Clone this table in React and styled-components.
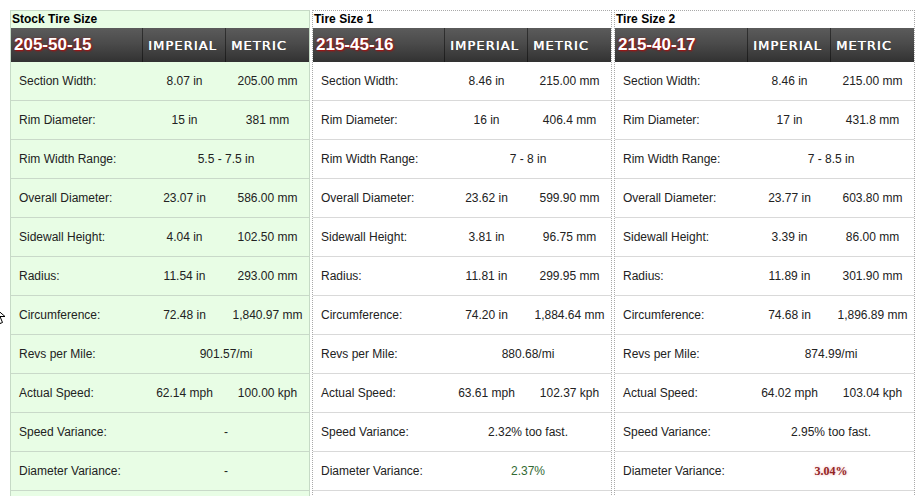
import React from "react";
import styled, { createGlobalStyle, css } from "styled-components";

const GlobalStyle = createGlobalStyle`
  html, body { margin: 0; padding: 0; overflow: hidden; background: #ffffff; }
  body { font-family: "Liberation Sans", Arial, sans-serif; }
`;

const Page = styled.div`
  position: relative;
  padding: 10px 0 0 10px;
`;

const Compare = styled.div`
  display: flex;
  align-items: flex-start;
  gap: 2px;
`;

const Panel = styled.section`
  box-sizing: border-box;
  width: ${(p) => p.$width}px;
  flex: none;
  ${(p) =>
    p.$stock
      ? css`
          border: 1px solid #c6dac6;
          background: #e8fde5;
        `
      : css`
          border: 1px dotted #a9a9a9;
          background: #ffffff;
        `}
`;

const Title = styled.div`
  height: 17px;
  padding-left: 1px;
  font: bold 12px/17px "Liberation Sans", Arial, sans-serif;
  color: #000;
`;

const HeaderBar = styled.div`
  display: grid;
  grid-template-columns: 1fr 83px 83px;
  height: 34px;
  background: linear-gradient(#5b5b5b 0%, #4b4b4b 45%, #323232 100%);
`;

const HeadCell = styled.div`
  display: flex;
  align-items: center;
  padding-left: ${(p) => (p.$size ? 3 : 5)}px;
  border-right: ${(p) => (p.$last ? "none" : "1px solid rgba(0,0,0,0.45)")};
  ${(p) =>
    p.$size
      ? css`
          font: bold 17px "Liberation Sans", Arial, sans-serif;
          color: #ffffff;
          text-shadow: 1px 1px 2px rgba(200, 0, 0, 0.85), -1px 0 2px rgba(170, 0, 0, 0.5);
        `
      : css`
          font: 13px "DejaVu Sans", Verdana, sans-serif;
          letter-spacing: 1.1px;
          color: #ffffff;
          text-shadow: 0.4px 0 0 #ffffff;
        `}
`;

const Row = styled.div`
  display: grid;
  grid-template-columns: 1fr 83px 83px;
  height: 38px;
  align-items: center;
  border-bottom: 1px solid ${(p) => (p.$stock ? "#c9d9c9" : "#d9d9d9")};
  font: 12px "Liberation Sans", Arial, sans-serif;
  color: #222;
`;

const Label = styled.div`
  padding-left: 8px;
  white-space: nowrap;
`;

const Value = styled.div`
  text-align: center;
  white-space: nowrap;
  ${(p) => p.$span && css`grid-column: span 2;`}
  ${(p) => p.$tone === "good" && css`color: #336a33;`}
  ${(p) =>
    p.$tone === "bad" &&
    css`
      color: #922424;
      font: bold 12px "Liberation Serif", "Times New Roman", serif;
      text-shadow: 0 0 3px rgba(220, 80, 80, 0.45);
    `}
`;

const Cursor = styled.svg`
  position: absolute;
  left: -7px;
  top: 306px;
`;

const labels = [
  "Section Width:",
  "Rim Diameter:",
  "Rim Width Range:",
  "Overall Diameter:",
  "Sidewall Height:",
  "Radius:",
  "Circumference:",
  "Revs per Mile:",
  "Actual Speed:",
  "Speed Variance:",
  "Diameter Variance:",
  "",
];

const panels = [
  {
    title: "Stock Tire Size",
    size: "205-50-15",
    stock: true,
    width: 300,
    values: [
      ["8.07 in", "205.00 mm"],
      ["15 in", "381 mm"],
      ["5.5 - 7.5 in"],
      ["23.07 in", "586.00 mm"],
      ["4.04 in", "102.50 mm"],
      ["11.54 in", "293.00 mm"],
      ["72.48 in", "1,840.97 mm"],
      ["901.57/mi"],
      ["62.14 mph", "100.00 kph"],
      ["-"],
      ["-"],
      [""],
    ],
  },
  {
    title: "Tire Size 1",
    size: "215-45-16",
    width: 300,
    values: [
      ["8.46 in", "215.00 mm"],
      ["16 in", "406.4 mm"],
      ["7 - 8 in"],
      ["23.62 in", "599.90 mm"],
      ["3.81 in", "96.75 mm"],
      ["11.81 in", "299.95 mm"],
      ["74.20 in", "1,884.64 mm"],
      ["880.68/mi"],
      ["63.61 mph", "102.37 kph"],
      ["2.32% too fast."],
      ["2.37%"],
      [""],
    ],
    tones: { 10: "good" },
  },
  {
    title: "Tire Size 2",
    size: "215-40-17",
    width: 301,
    values: [
      ["8.46 in", "215.00 mm"],
      ["17 in", "431.8 mm"],
      ["7 - 8.5 in"],
      ["23.77 in", "603.80 mm"],
      ["3.39 in", "86.00 mm"],
      ["11.89 in", "301.90 mm"],
      ["74.68 in", "1,896.89 mm"],
      ["874.99/mi"],
      ["64.02 mph", "103.04 kph"],
      ["2.95% too fast."],
      ["3.04%"],
      [""],
    ],
    tones: { 10: "bad" },
  },
];

function TirePanel({ panel }) {
  return (
    <Panel $stock={panel.stock} $width={panel.width}>
      <Title>{panel.title}</Title>
      <HeaderBar>
        <HeadCell $size>{panel.size}</HeadCell>
        <HeadCell>IMPERIAL</HeadCell>
        <HeadCell $last>METRIC</HeadCell>
      </HeaderBar>
      {labels.map((label, i) => {
        const vals = panel.values[i];
        const tone = panel.tones ? panel.tones[i] : undefined;
        return (
          <Row key={i} $stock={panel.stock}>
            <Label>{label}</Label>
            {vals.length === 1 ? (
              <Value $span $tone={tone}>
                {vals[0]}
              </Value>
            ) : (
              <>
                <Value>{vals[0]}</Value>
                <Value>{vals[1]}</Value>
              </>
            )}
          </Row>
        );
      })}
    </Panel>
  );
}

export default function App() {
  return (
    <Page>
      <GlobalStyle />
      <Compare>
        {panels.map((p) => (
          <TirePanel key={p.title} panel={p} />
        ))}
      </Compare>
      <Cursor width="14" height="20" viewBox="0 0 14 20">
        <path
          d="M1 1 L1 15 L4.5 11.5 L7 17.5 L9.5 16.5 L7 10.5 L12 10.5 Z"
          fill="#fff"
          stroke="#000"
          strokeWidth="1"
          strokeLinejoin="miter"
        />
      </Cursor>
    </Page>
  );
}
